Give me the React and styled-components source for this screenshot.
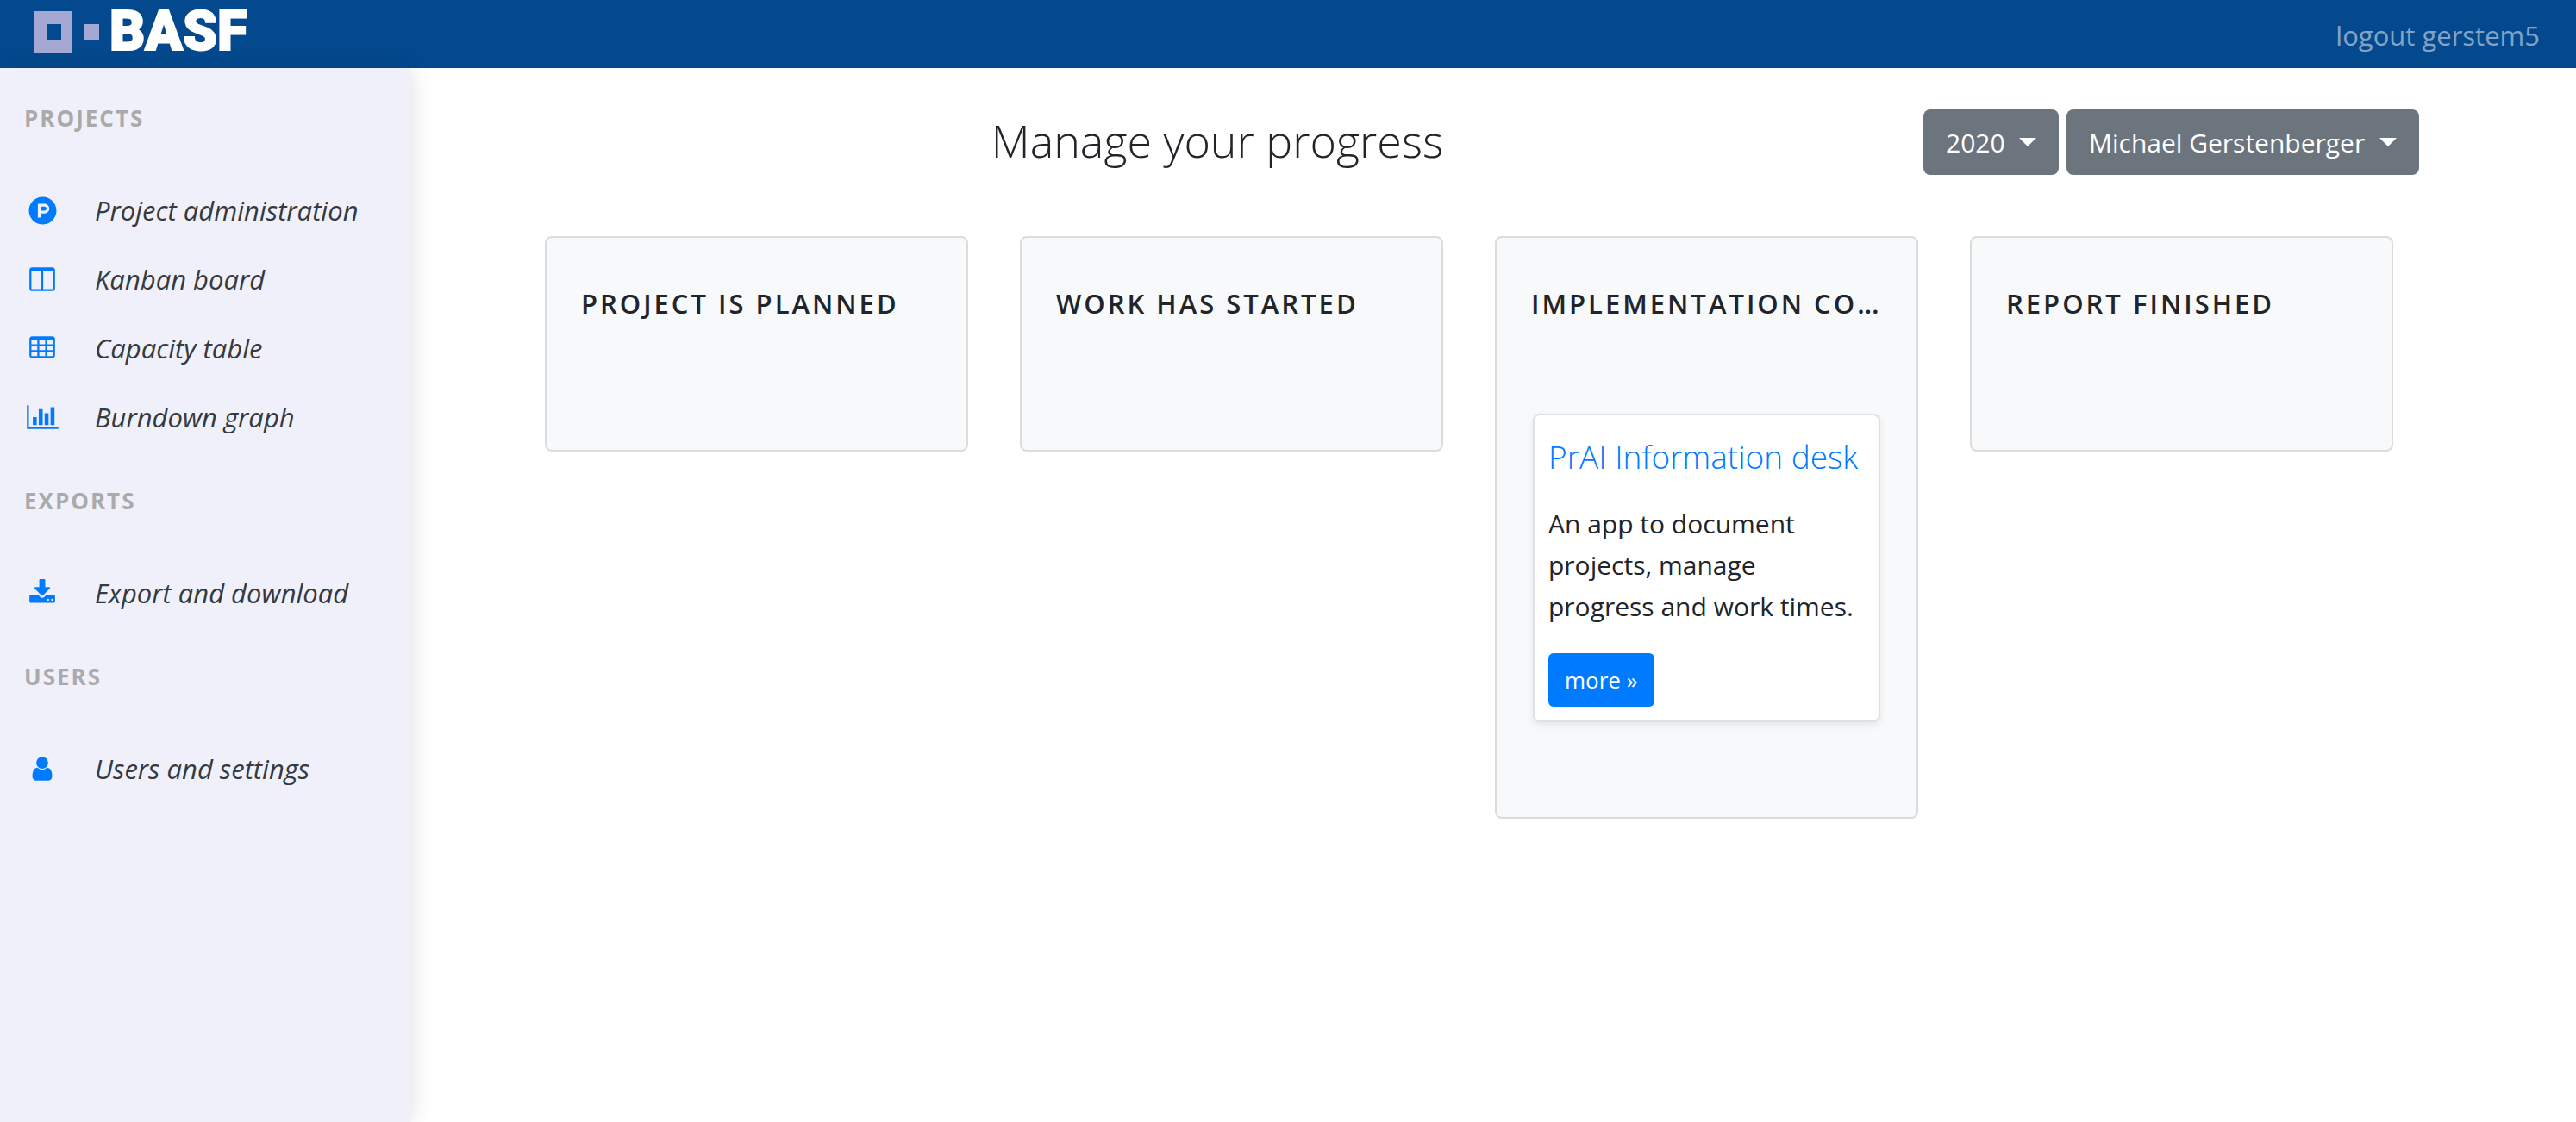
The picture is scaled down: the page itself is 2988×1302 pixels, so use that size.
import React from "react";
import styled, { createGlobalStyle } from "styled-components";
import { FaProductHunt } from "react-icons/fa";

const GlobalStyle = createGlobalStyle`
  *, *::before, *::after { box-sizing: border-box; }
  body {
    margin: 0;
    background: #fff;
    color: #212529;
    font-family: "Segoe UI", "Open Sans", "Noto Sans", sans-serif;
    font-size: 30px;
    line-height: 48px;
  }
`;

const Page = styled.div`
  display: flex;
  flex-direction: column;
  min-height: 100vh;
`;

const TopBar = styled.header`
  display: flex;
  align-items: center;
  justify-content: space-between;
  height: 79px;
  padding: 0 42px 0 40px;
  background: #04498e;
`;

const Brand = styled.a`
  display: flex;
  align-items: center;
  gap: 8px;
  height: 74px;
  align-self: flex-start;
  color: #fff;
  font-family: Roboto, "Liberation Sans", sans-serif;
  font-size: 64px;
  font-weight: 900;
  line-height: 74px;
  text-decoration: none;
  -webkit-text-stroke: 2px #fff;
`;

const LogoutLink = styled.a`
  padding-top: 2px;
  color: rgba(255, 255, 255, 0.5);
  font-size: 31px;
  text-decoration: none;
`;

const Body = styled.div`
  display: flex;
  flex: 1;
`;

const Sidebar = styled.nav`
  flex: none;
  width: 476px;
  padding-top: 1px;
  background: #f0f0fa;
  box-shadow: 4px 0 22px rgba(0, 0, 0, 0.1);
`;

const SectionLabel = styled.h2`
  margin: 0;
  padding: 39px 28px 49px;
  color: #aaa;
  font-size: 26px;
  font-weight: 700;
  letter-spacing: 2px;
  line-height: 36px;
  text-transform: uppercase;
`;

const NavList = styled.ul`
  margin: 0;
  padding: 0;
  list-style: none;
`;

const NavLink = styled.a`
  display: flex;
  align-items: center;
  gap: 42px;
  height: 80px;
  padding-left: 30px;
  color: #343a40;
  font-size: 31px;
  font-style: italic;
  text-decoration: none;
`;

const IconCell = styled.span`
  display: flex;
  flex: none;
  align-items: center;
  justify-content: center;
  width: 38px;
  color: #007bff;
`;

const Main = styled.main`
  flex: 1;
  min-width: 0;
  padding: 48px 182px 48px 126px;
`;

const PageHead = styled.div`
  display: flex;
  align-items: flex-start;
  gap: 9px;
  margin-bottom: 71px;
`;

const PageTitle = styled.h1`
  flex: 1;
  margin: 0;
  font-size: 52px;
  font-weight: 300;
  line-height: 72px;
  text-align: center;
`;

const Picker = styled.label`
  position: relative;
  display: block;
`;

const PickerSelect = styled.select`
  display: block;
  height: 76px;
  padding: 2px 62px 0 26px;
  appearance: none;
  border: 0;
  border-radius: 8px;
  background: #6c757d;
  color: #fff;
  font: inherit;
  cursor: pointer;
`;

const Caret = styled.span`
  position: absolute;
  top: 33px;
  right: 26px;
  border: 10px solid transparent;
  border-top-color: #fff;
  border-bottom: 0;
  pointer-events: none;
`;

const Board = styled.div`
  display: grid;
  grid-template-columns: repeat(4, minmax(0, 1fr));
  align-items: start;
  gap: 60px;
  margin: 0 30px;
`;

const Column = styled.section`
  padding: 52px 40px 42px;
  border: 2px solid #dcdcdc;
  border-radius: 8px;
  background: #f8f9fb;
`;

const ColumnTitle = styled.h2`
  margin: 0 0 104px;
  overflow: hidden;
  font-size: 31px;
  font-weight: 600;
  letter-spacing: 3px;
  line-height: 48px;
  text-overflow: ellipsis;
  text-transform: uppercase;
  white-space: nowrap;
`;

const Card = styled.article`
  margin: 0 2px 68px;
  padding: 18px 16px 16px;
  border: 2px solid #dfdfdf;
  border-radius: 8px;
  background: #fff;
  box-shadow: 0 4px 8px rgba(0, 0, 0, 0.075);
`;

const CardTitle = styled.h3`
  margin: 0 0 24px;
  color: #007bff;
  font-size: 37px;
  font-weight: 300;
  line-height: 60px;
  white-space: nowrap;
`;

const CardText = styled.p`
  margin: 0 0 30px;
`;

const MoreButton = styled.button`
  display: block;
  height: 62px;
  padding: 0 19px;
  border: 0;
  border-radius: 6px;
  background: #007bff;
  color: #fff;
  font: inherit;
  font-size: 26px;
  cursor: pointer;
`;

const Glyph = ({ d, wide }) => (
  <svg
    width={wide ? 37 : 32}
    height="32"
    viewBox={wide ? "0 0 2048 1792" : "0 0 1792 1792"}
    fill="currentColor"
    fillRule="evenodd"
    aria-hidden="true"
  >
    <path d={d} />
  </svg>
);

const tableCells = [384, 768, 1152]
  .map((y) => [192, 704, 1216].map((x) => `M${x} ${y}h384v256h-384z`).join(""))
  .join("");

const glyphs = {
  columns:
    "M224 1536h608v-1152h-640v1120q0 13 9.500 22.500t22.500 9.500zm1376-32v-1120h-640v1152h608q13 0 22.500-9.500t9.500-22.500zm128-1216v1216q0 66-47 113t-113 47h-1344q-66 0-113-47t-47-113v-1216q0-66 47-113t113-47h1344q66 0 113 47t47 113z",
  table:
    "M224 128h1344q66 0 113 47t47 113v1088q0 66-47 113t-113 47h-1344q-66 0-113-47t-47-113v-1088q0-66 47-113t113-47z" +
    tableCells,
  chart:
    "M640 896v512h-256v-512h256zm384-512v1024h-256v-1024h256zm1024 1152v128h-2048v-1536h128v1408h1920zm-640-896v768h-256v-768h256zm384-384v1152h-256v-1152h256z",
  download:
    "M1344 1344q0-26-19-45t-45-19-45 19-19 45 19 45 45 19 45-19 19-45zm256 0q0-26-19-45t-45-19-45 19-19 45 19 45 45 19 45-19 19-45zm128-224v320q0 40-28 68t-68 28h-1472q-40 0-68-28t-28-68v-320q0-40 28-68t68-28h465l135 136q58 56 136 56t136-56l136-136h464q40 0 68 28t28 68zm-325-569q17 41-14 70l-448 448q-18 19-45 19t-45-19l-448-448q-31-29-14-70 17-39 59-39h256v-448q0-26 19-45t45-19h256q26 0 45 19t19 45v448h256q42 0 59 39z",
  user:
    "M1536 1399q0 109-62.500 187t-150.500 78h-854q-88 0-150.500-78t-62.500-187q0-85 8.500-160.500t31.500-152 58.500-131 94-89 134.500-34.500q131 128 313 128t313-128q76 0 134.500 34.500t94 89 58.500 131 31.500 152 8.500 160.500zm-256-887q0 159-112.500 271.500t-271.500 112.500-271.500-112.500-112.500-271.500 112.500-271.500 271.500-112.500 271.500 112.500 112.500 271.500z",
};

const sections = [
  {
    label: "Projects",
    items: [
      { text: "Project administration", icon: <FaProductHunt size={33} aria-hidden="true" /> },
      { text: "Kanban board", icon: <Glyph d={glyphs.columns} /> },
      { text: "Capacity table", icon: <Glyph d={glyphs.table} /> },
      { text: "Burndown graph", icon: <Glyph d={glyphs.chart} wide /> },
    ],
  },
  {
    label: "Exports",
    items: [{ text: "Export and download", icon: <Glyph d={glyphs.download} /> }],
  },
  {
    label: "Users",
    items: [{ text: "Users and settings", icon: <Glyph d={glyphs.user} /> }],
  },
];

const columns = [
  { title: "Project is planned", cards: [] },
  { title: "Work has started", cards: [] },
  {
    title: "Implementation completed",
    cards: [
      {
        title: "PrAI Information desk",
        text: "An app to document projects, manage progress and work times.",
      },
    ],
  },
  { title: "Report finished", cards: [] },
];

const LogoMark = () => (
  <svg width="79" height="48" viewBox="0 0 79 48" fill="#a4a8d3" aria-hidden="true">
    <path fillRule="evenodd" d="M0 0h44v48h-44zM14 15v18h17v-18z" />
    <path d="M58 15h17v18h-17z" />
  </svg>
);

const Dropdown = ({ label, value }) => (
  <Picker>
    <PickerSelect aria-label={label} defaultValue={value}>
      <option>{value}</option>
    </PickerSelect>
    <Caret />
  </Picker>
);

export default function App() {
  return (
    <Page>
      <GlobalStyle />
      <TopBar>
        <Brand href="#home">
          <LogoMark />
          BASF
        </Brand>
        <LogoutLink href="#logout">logout gerstem5</LogoutLink>
      </TopBar>
      <Body>
        <Sidebar>
          {sections.map((section) => (
            <React.Fragment key={section.label}>
              <SectionLabel>{section.label}</SectionLabel>
              <NavList>
                {section.items.map((item) => (
                  <li key={item.text}>
                    <NavLink href="#">
                      <IconCell>{item.icon}</IconCell>
                      {item.text}
                    </NavLink>
                  </li>
                ))}
              </NavList>
            </React.Fragment>
          ))}
        </Sidebar>
        <Main>
          <PageHead>
            <PageTitle>Manage your progress</PageTitle>
            <Dropdown label="Year" value="2020" />
            <Dropdown label="Person" value="Michael Gerstenberger" />
          </PageHead>
          <Board>
            {columns.map((column) => (
              <Column key={column.title}>
                <ColumnTitle>{column.title}</ColumnTitle>
                {column.cards.map((card) => (
                  <Card key={card.title}>
                    <CardTitle>{card.title}</CardTitle>
                    <CardText>{card.text}</CardText>
                    <MoreButton type="button">more »</MoreButton>
                  </Card>
                ))}
              </Column>
            ))}
          </Board>
        </Main>
      </Body>
    </Page>
  );
}
